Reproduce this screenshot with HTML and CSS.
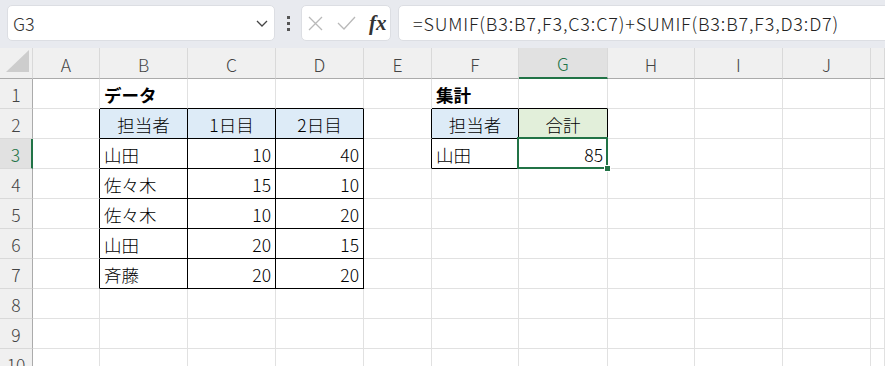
FILE: index.html
```html
<!DOCTYPE html>
<html>
<head>
  <meta charset="UTF-8">
  <title>SUMIF</title>
  <link rel="stylesheet" href="styles.css">
</head>
<body>

  <!-- name box + formula bar -->
  <div class="toolbar">
    <div class="namebox">
      <span>G3</span>
      <svg class="chev" width="12" height="7" viewBox="0 0 12 7"><path d="M1 1 L6 6 L11 1" fill="none" stroke="#444" stroke-width="1.3"/></svg>
    </div>
    <div class="dots"><i></i><i></i><i></i></div>
    <div class="fxbox">
      <svg class="cancel" width="15" height="15" viewBox="0 0 15 15"><path d="M1 1 L14 14 M14 1 L1 14" stroke="#b9b9b9" stroke-width="1.3"/></svg>
      <svg class="enter" width="19" height="14" viewBox="0 0 19 14"><path d="M1 7 L7 13 L18 1" fill="none" stroke="#b9b9b9" stroke-width="1.3"/></svg>
      <span class="fx">fx</span>
    </div>
    <div class="formula">=SUMIF(B3:B7,F3,C3:C7)+SUMIF(B3:B7,F3,D3:D7)</div>
  </div>

  <!-- sheet grid -->
  <div class="sheet">
    <div class="ch corner"><svg width="23" height="22" viewBox="0 0 23 22"><path d="M23 0 L23 22 L0 22 Z" fill="#cdcdcd"/></svg></div>
    <div class="ch">A</div>
    <div class="ch">B</div>
    <div class="ch">C</div>
    <div class="ch">D</div>
    <div class="ch">E</div>
    <div class="ch">F</div>
    <div class="ch sel">G</div>
    <div class="ch">H</div>
    <div class="ch">I</div>
    <div class="ch">J</div>
    <div class="ch"></div>

    <div class="rh">1</div>
    <div class="c"></div>
    <div class="c tb bold">データ</div>
    <div class="c tb"></div>
    <div class="c tb"></div>
    <div class="c"></div>
    <div class="c tb bold">集計</div>
    <div class="c tb"></div>
    <div class="c"></div>
    <div class="c"></div>
    <div class="c"></div>
    <div class="c"></div>

    <div class="rh">2</div>
    <div class="c tr"></div>
    <div class="c t blue ctr">担当者</div>
    <div class="c t blue ctr">1日目</div>
    <div class="c t blue ctr">2日目</div>
    <div class="c tr"></div>
    <div class="c t blue ctr">担当者</div>
    <div class="c t green ctr">合計</div>
    <div class="c"></div>
    <div class="c"></div>
    <div class="c"></div>
    <div class="c"></div>

    <div class="rh sel">3</div>
    <div class="c tr"></div>
    <div class="c t">山田</div>
    <div class="c t num">10</div>
    <div class="c t num">40</div>
    <div class="c tr"></div>
    <div class="c t">山田</div>
    <div class="c t num active">85<span class="handle"></span></div>
    <div class="c"></div>
    <div class="c"></div>
    <div class="c"></div>
    <div class="c"></div>

    <div class="rh">4</div>
    <div class="c tr"></div>
    <div class="c t">佐々木</div>
    <div class="c t num">15</div>
    <div class="c t num">10</div>
    <div class="c"></div>
    <div class="c"></div>
    <div class="c"></div>
    <div class="c"></div>
    <div class="c"></div>
    <div class="c"></div>
    <div class="c"></div>

    <div class="rh">5</div>
    <div class="c tr"></div>
    <div class="c t">佐々木</div>
    <div class="c t num">10</div>
    <div class="c t num">20</div>
    <div class="c"></div>
    <div class="c"></div>
    <div class="c"></div>
    <div class="c"></div>
    <div class="c"></div>
    <div class="c"></div>
    <div class="c"></div>

    <div class="rh">6</div>
    <div class="c tr"></div>
    <div class="c t">山田</div>
    <div class="c t num">20</div>
    <div class="c t num">15</div>
    <div class="c"></div>
    <div class="c"></div>
    <div class="c"></div>
    <div class="c"></div>
    <div class="c"></div>
    <div class="c"></div>
    <div class="c"></div>

    <div class="rh">7</div>
    <div class="c tr"></div>
    <div class="c t">斉藤</div>
    <div class="c t num">20</div>
    <div class="c t num">20</div>
    <div class="c"></div>
    <div class="c"></div>
    <div class="c"></div>
    <div class="c"></div>
    <div class="c"></div>
    <div class="c"></div>
    <div class="c"></div>

    <div class="rh">8</div>
    <div class="c"></div>
    <div class="c"></div>
    <div class="c"></div>
    <div class="c"></div>
    <div class="c"></div>
    <div class="c"></div>
    <div class="c"></div>
    <div class="c"></div>
    <div class="c"></div>
    <div class="c"></div>
    <div class="c"></div>

    <div class="rh">9</div>
    <div class="c"></div>
    <div class="c"></div>
    <div class="c"></div>
    <div class="c"></div>
    <div class="c"></div>
    <div class="c"></div>
    <div class="c"></div>
    <div class="c"></div>
    <div class="c"></div>
    <div class="c"></div>
    <div class="c"></div>

    <div class="rh">10</div>
    <div class="c"></div>
    <div class="c"></div>
    <div class="c"></div>
    <div class="c"></div>
    <div class="c"></div>
    <div class="c"></div>
    <div class="c"></div>
    <div class="c"></div>
    <div class="c"></div>
    <div class="c"></div>
    <div class="c"></div>
  </div>

</body>
</html>
```

FILE: styles.css
```css
/* page */
body {
  margin: 0;
  overflow: hidden;
  background: #fff;
  font-family: "Noto Sans CJK JP", "Noto Sans", sans-serif;
  font-weight: 300;
  color: #000;
}

/* formula bar */
.toolbar {
  height: 48px;
  background: #e8eaef;
  display: flex;
  align-items: flex-start;
  padding: 5px 0 0 7px;
  box-sizing: border-box;
}

.namebox, .fxbox, .formula {
  height: 36px;
  background: #fff;
  border: 1px solid #dcdee3;
  border-radius: 5px;
  box-sizing: border-box;
  display: flex;
  align-items: center;
}

.namebox {
  width: 268px;
  padding: 0 6px 0 5px;
  justify-content: space-between;
  font-size: 18px;
  color: #333;
}

.dots {
  width: 26px;
  height: 36px;
  display: flex;
  flex-direction: column;
  align-items: center;
  justify-content: center;
  gap: 3px;
}

.dots i {
  width: 3px;
  height: 3px;
  background: #555;
}

.fxbox {
  width: 90px;
  padding-left: 6px;
}

.enter {
  margin-left: 14px;
}

.fx {
  margin-left: 13px;
  font-family: "Liberation Serif", serif;
  font-style: italic;
  font-weight: bold;
  font-size: 21px;
  color: #333;
}

.formula {
  flex: 1;
  margin-left: 7px;
  margin-right: -10px;
  padding-left: 14px;
  font-size: 18px;
  letter-spacing: 0.82px;
  color: #222;
}

/* sheet grid */
.sheet {
  display: grid;
  grid-template-columns: 33px 67px 88px 88px 88px 68px 87px 89px 87px 88px 88px 1fr;
  grid-template-rows: 31px repeat(10, 30px);
  font-size: 17.5px;
}

.sheet > div {
  box-sizing: border-box;
  display: flex;
  align-items: center;
  padding: 2px 4px 0;
  white-space: nowrap;
}

.c {
  border-right: 1px solid #e1e1e1;
  border-bottom: 1px solid #e1e1e1;
}

.ch, .rh {
  background: #f0f0f0;
  color: #444;
  justify-content: center;
}

.ch {
  border-right: 1px solid #d9d9d9;
  border-bottom: 1px solid #ababab;
}

.rh {
  border-right: 1px solid #ababab;
  border-bottom: 1px solid #d9d9d9;
}

.corner {
  align-items: flex-end;
  justify-content: flex-end;
  padding: 0 3px 4px 0 !important;
}

.ch.sel {
  background: #e1e1e1;
  color: #217346;
  border-bottom: 2px solid #217346;
}

.rh.sel {
  background: #e1e1e1;
  color: #217346;
  border-right: 2px solid #217346;
}

/* table borders */
.t {
  border-right-color: #000;
  border-bottom-color: #000;
}

.tr {
  border-right-color: #000;
}

.tb {
  border-bottom-color: #000;
}

.blue {
  background: #ddebf7;
}

.green {
  background: #e2efda;
}

.ctr {
  justify-content: center;
}

.num {
  justify-content: flex-end;
}

.bold {
  font-weight: bold;
}

/* active cell */
.active {
  position: relative;
}

.active::after {
  content: "";
  position: absolute;
  top: -2px;
  left: -2px;
  right: -1px;
  bottom: -1px;
  border: 2px solid #217346;
}

.handle {
  position: absolute;
  right: -4px;
  bottom: -4px;
  width: 5px;
  height: 5px;
  background: #217346;
  border: 1px solid #fff;
  z-index: 1;
}
```
